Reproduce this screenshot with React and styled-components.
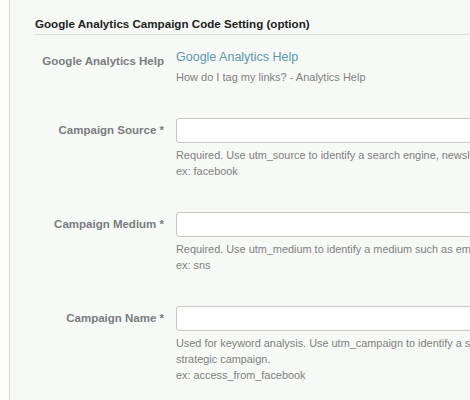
import styled, { createGlobalStyle } from 'styled-components'

const GlobalStyle = createGlobalStyle`
  html, body {
    margin: 0;
    padding: 0;
    background: #fdfdf9;
    overflow: hidden;
  }
  body {
    font-family: "Liberation Sans", Arial, sans-serif;
  }
`

const Page = styled.div`
  padding-left: 9px;
  height: 400px;
`

const Panel = styled.section`
  height: 100%;
  box-sizing: border-box;
  border-left: 1px solid #d9d9d6;
  background: #f7f9f7;
  padding-left: 25px;
  width: 700px;
`

const Heading = styled.h3`
  margin: 0;
  padding: 17px 0 4px;
  font-size: 11.6px;
  line-height: 13px;
  font-weight: bold;
  color: #222;
  border-bottom: 1px solid #dcdcdc;
`

const Rows = styled.div`
  display: flex;
  flex-direction: column;
  gap: 33px;
  padding-top: 14px;
`

const Row = styled.div`
  display: grid;
  grid-template-columns: 129px 1fr;
  column-gap: 12px;
  align-items: start;
`

const Label = styled.label`
  text-align: right;
  font-size: 11.5px;
  font-weight: bold;
  color: #7a7c80;
  line-height: 16px;
  padding-top: ${(p) => p.$offset || 0}px;
  white-space: nowrap;
`

const Field = styled.div`
  display: flex;
  flex-direction: column;
`

const HelpLink = styled.a`
  font-size: 12.5px;
  line-height: 16px;
  color: #5b97aa;
  text-decoration: none;
  margin-bottom: 4px;
`

const SubLink = styled.a`
  font-size: 11px;
  line-height: 16px;
  color: #808080;
  text-decoration: none;
`

const Input = styled.input`
  box-sizing: border-box;
  width: 420px;
  height: 25px;
  border: 1px solid #c9c5c1;
  border-radius: 3px;
  background: #fff;
  padding: 0 6px;
  font-family: inherit;
  font-size: 12px;
  outline: none;
  margin-bottom: 4px;
`

const Help = styled.p`
  margin: 0;
  font-size: 10.9px;
  line-height: 16px;
  color: #808080;
  white-space: nowrap;
`

const fields = [
  {
    label: 'Campaign Source',
    lines: [
      'Required. Use utm_source to identify a search engine, newsletter name, or other source.',
      'ex: facebook',
    ],
  },
  {
    label: 'Campaign Medium',
    lines: [
      'Required. Use utm_medium to identify a medium such as email or cost-per-click.',
      'ex: sns',
    ],
  },
  {
    label: 'Campaign Name',
    lines: [
      'Used for keyword analysis. Use utm_campaign to identify a specific product promotion or',
      'strategic campaign.',
      'ex: access_from_facebook',
    ],
  },
]

export default function App() {
  return (
    <Page>
      <GlobalStyle />
      <Panel>
        <Heading>Google Analytics Campaign Code Setting (option)</Heading>
        <Rows>
          <Row>
            <Label $offset={4}>Google Analytics Help</Label>
            <Field>
              <HelpLink href="#">Google Analytics Help</HelpLink>
              <SubLink href="#">How do I tag my links? - Analytics Help</SubLink>
            </Field>
          </Row>
          {fields.map((f) => (
            <Row key={f.label}>
              <Label $offset={4}>{f.label} *</Label>
              <Field>
                <Input type="text" />
                {f.lines.map((l) => (
                  <Help key={l}>{l}</Help>
                ))}
              </Field>
            </Row>
          ))}
        </Rows>
      </Panel>
    </Page>
  )
}
